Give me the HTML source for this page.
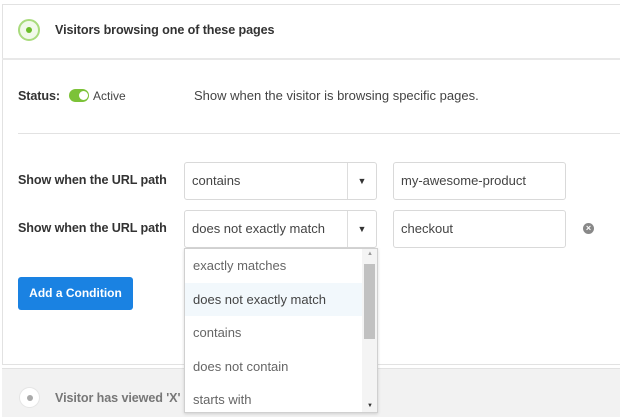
<!DOCTYPE html>
<html><head><style>
*{box-sizing:border-box;margin:0;padding:0}
body{width:620px;height:417px;background:#fff;font-family:"Liberation Sans",sans-serif;color:#333;position:relative;overflow:hidden;font-size:13px}
.a{position:absolute}
.panel{left:2px;top:4px;width:620px;height:361px;border:1px solid #e2e2e2;background:#fff}
.lbl{font-weight:bold;font-size:12.6px;color:#333;letter-spacing:-0.1px}
.box{border:1px solid #d9d9d9;border-radius:3px;background:#fff;height:38px;line-height:36px;padding-left:7px;font-size:13px;color:#444}
.arr{position:absolute;right:0;top:0;width:29px;height:36px;border-left:1px solid #ddd;text-align:center;font-size:9px;color:#333}
.it{height:33.5px;line-height:33px;padding-left:8px;color:#666;font-size:13px}
</style></head><body>
<div class="a panel"></div>
<div class="a" style="left:2px;top:58px;width:620px;height:2px;background:#e8e8e8"></div>
<div class="a" style="left:18px;top:19px;width:22px;height:22px;border-radius:50%;border:2px solid #a9db7d;background:#f1f9ea"></div>
<div class="a" style="left:26px;top:27px;width:6px;height:6px;border-radius:50%;background:#6cbd2a"></div>
<div class="a lbl" style="left:55px;top:23px">Visitors browsing one of these pages</div>
<div class="a lbl" style="left:18px;top:89px">Status:</div>
<div class="a" style="left:69px;top:89px;width:20px;height:13px;border-radius:7px;background:#7cc238"></div>
<div class="a" style="left:79px;top:91px;width:9px;height:9px;border-radius:50%;background:#fff"></div>
<div class="a" style="left:93px;top:89px;font-size:12px;color:#444">Active</div>
<div class="a" style="left:194px;top:88px;color:#444">Show when the visitor is browsing specific pages.</div>
<div class="a" style="left:18px;top:133px;width:602px;height:1px;background:#e2e2e2"></div>
<div class="a lbl" style="left:18px;top:173px">Show when the URL path</div>
<div class="a lbl" style="left:18px;top:221px">Show when the URL path</div>
<div class="a box" style="left:184px;top:162px;width:193px">contains<div class="arr">▼</div></div>
<div class="a box" style="left:184px;top:210px;width:193px">does not exactly match<div class="arr">▼</div></div>
<div class="a box" style="left:393px;top:162px;width:173px">my-awesome-product</div>
<div class="a box" style="left:393px;top:210px;width:173px">checkout</div>
<div class="a" style="left:583px;top:223px;width:11px;height:11px;border-radius:50%;background:#888;color:#fff;font-size:9px;line-height:11px;text-align:center;font-weight:bold">×</div>
<div class="a" style="left:18px;top:277px;width:115px;height:33px;background:#1a82e2;border-radius:3px;color:#fff;font-weight:bold;font-size:12px;line-height:33px;text-align:center">Add a Condition</div>
<div class="a" style="left:2px;top:368px;width:620px;height:49px;background:#f2f2f2;border-top:1px solid #e2e2e2"></div>
<div class="a" style="left:19px;top:387px;width:21px;height:21px;border-radius:50%;background:#fff;border:1px solid #e5e5e5"></div>
<div class="a" style="left:27px;top:395px;width:6px;height:6px;border-radius:50%;background:#aaa"></div>
<div class="a lbl" style="left:55px;top:391px;color:#777">Visitor has viewed 'X'</div>
<div class="a" style="left:184px;top:248px;width:194px;height:165px;background:#fff;border:1px solid #d0d0d0;box-shadow:0 1px 3px rgba(0,0,0,.15)">
<div class="it">exactly matches</div>
<div class="it" style="background:#f2f8fc;color:#444">does not exactly match</div>
<div class="it">contains</div>
<div class="it">does not contain</div>
<div class="it">starts with</div>
<div class="a" style="right:0;top:0;width:15px;height:163px;background:#f4f4f4"></div>
<div class="a" style="right:2px;top:15px;width:11px;height:75px;background:#c1c1c1"></div>
<div class="a" style="right:4px;top:2px;font-size:6px;color:#999">▲</div>
<div class="a" style="right:4px;top:154px;font-size:6px;color:#333">▼</div>
</div>
</body></html>
